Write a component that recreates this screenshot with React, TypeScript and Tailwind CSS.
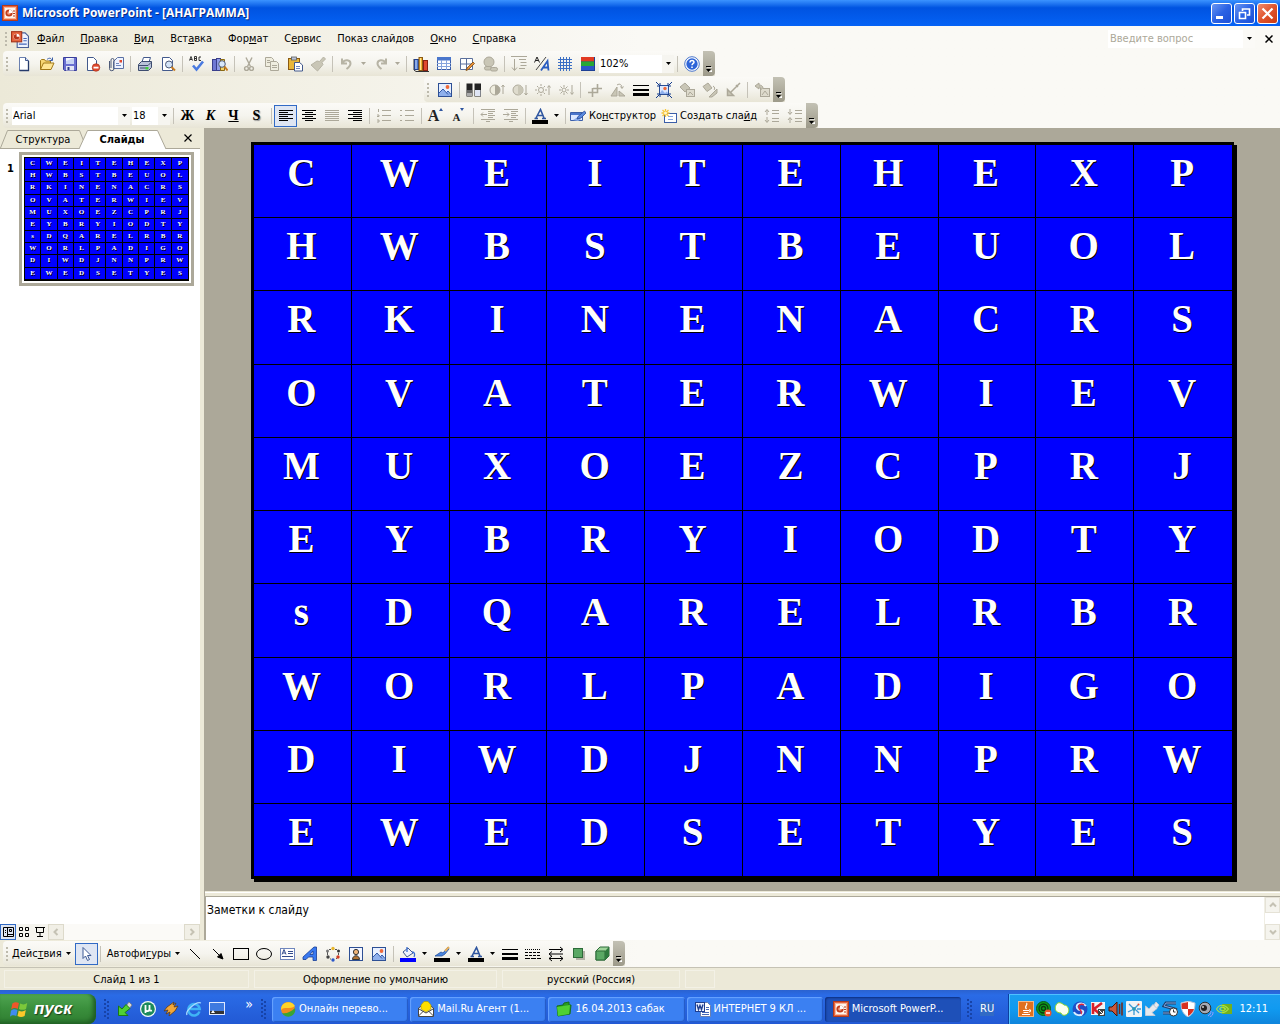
import { ReactNode } from "react";

const LETTERS = [
  "CWEITEHEXP",
  "HWBSTBEUOL",
  "RKINENACRS",
  "OVATERWIEV",
  "MUXOEZCPRJ",
  "EYBRYIODTY",
  "sDQARELRBR",
  "WORLPADIGO",
  "DIWDJNNPRW",
  "EWEDSETYES",
];

// [before, access key, after]
const MENUS = [
  ["", "Ф", "айл"],
  ["", "П", "равка"],
  ["", "В", "ид"],
  ["Вст", "а", "вка"],
  ["Фор", "м", "ат"],
  ["С", "е", "рвис"],
  ["Показ слай", "д", "ов"],
  ["", "О", "кно"],
  ["", "С", "правка"],
];

const G = "#aca899";

const ICONS: Record<string, ReactNode> = {
  ppt: (
    <>
      <rect x="0.5" y="0.5" width="15" height="15" fill="#e8643c" stroke="#b23a1c" />
      <rect x="2.5" y="2.5" width="11" height="11" fill="#fff4ec" stroke="#f7b79c" />
      <circle cx="7" cy="8" r="3.6" fill="#c23c1c" />
      <circle cx="7" cy="8" r="1.8" fill="#f4a184" />
      <path d="M7 8V4.500A3.500 3.500 0 0 1 10.500 8Z" fill="#fff" />
      <path d="M11 6h2M11 8.500h2M11 11h2" stroke="#b23a1c" />
    </>
  ),
  pptDoc: (
    <>
      <path d="M5.500 2.500h7l3 3v10h-10z" fill="#eef3ff" stroke="#4a5f96" />
      <path d="M11 7.500h3M11 9.500h3M7 12.500h7" stroke="#4567b8" />
      <rect x="0.5" y="1.500" width="9" height="9" fill="#e8643c" stroke="#a5341a" />
      <circle cx="5" cy="6" r="2.700" fill="#fff" />
      <path d="M5 6V3.500A2.500 2.500 0 1 0 7.500 6Z" fill="#b8361a" />
    </>
  ),
  newDoc: (
    <>
      <path d="M3.500 1.500h6l3 3v10h-9z" fill="#fff" stroke="#6a80b0" />
      <path d="M9.500 1.500v3h3" fill="#cfdcf5" stroke="#42598c" />
      <path d="M12.500 5v9.500h-9" fill="none" stroke="#253a6b" strokeWidth="1.300" />
    </>
  ),
  open: (
    <>
      <path d="M1.500 13.500v-9l1-1h3l1 1.500h5v2.500" fill="#f7d774" stroke="#a07818" />
      <path d="M1.500 13.500l3-6.500h10.500l-3 6.500z" fill="#ffe694" stroke="#a07818" />
      <path d="M8 3.500c2-2 4-1.500 5 .500M13.500 1.500v3h-3" fill="none" stroke="#3b5ea8" />
    </>
  ),
  save: (
    <>
      <path d="M1.500 1.500h13v13h-12l-1-1z" fill="#6a6fd0" stroke="#3a3f9c" />
      <rect x="4" y="2" width="8" height="6" fill="#f4f6ff" />
      <path d="M4 5l8-3v6H4z" fill="#c9d4f4" />
      <rect x="4" y="10" width="8" height="4.500" fill="#e4e6f4" />
      <rect x="5.500" y="11" width="2" height="3" fill="#2d3a8c" />
    </>
  ),
  perm: (
    <>
      <path d="M2.500 1.500h6l3 3v10h-9z" fill="#fff" stroke="#42598c" />
      <circle cx="11" cy="11.500" r="3.800" fill="#e0492e" stroke="#a12a14" strokeWidth=".6" />
      <rect x="8.500" y="10.700" width="5" height="1.800" fill="#fff" />
    </>
  ),
  mail: (
    <>
      <path d="M5.500 5.500l4-4h6v11h-10z" fill="#eef3ff" stroke="#5a70a4" />
      <rect x="11.500" y="4" width="2.500" height="2.500" fill="#e0492e" />
      <path d="M8 7.500h3M8 9.500h5" stroke="#6f86bd" />
      <path d="M1.500 5v7.500a2.200 2.200 0 0 0 4.500 0V4a1.500 1.500 0 0 0-3 0v8" fill="none" stroke="#4d5a78" />
    </>
  ),
  print: (
    <>
      <path d="M5 6l1.500-4.500h7L12 6z" fill="#fff" stroke="#42598c" />
      <path d="M1.500 8.500l3-3h10v6l-3 3h-10z" fill="#b9c3d8" stroke="#3d4c6e" />
      <path d="M2 9.500h9l3-3M3 12h6" stroke="#3d4c6e" fill="none" />
      <rect x="8.500" y="11" width="3" height="2.500" fill="#3fd03a" />
    </>
  ),
  preview: (
    <>
      <path d="M2.500 1.500h7l3 3v10h-10z" fill="#fff" stroke="#42598c" />
      <circle cx="9" cy="8.500" r="3.500" fill="#d4e4f7" stroke="#4d5a78" />
      <path d="M11.500 11l3.500 3.500" stroke="#c77a1e" strokeWidth="2" />
    </>
  ),
  spell: (
    <>
      <path d="M.500 4.500L2 .5l1.500 4M1 3.500h2M5.500.5v4h2v-2h-2 2v-2zM12 1h-2v3.500h2" fill="none" stroke="#222" strokeWidth=".9" />
      <path d="M4 9.500l3.500 4L14 5.500" fill="none" stroke="#4a7ae0" strokeWidth="2.600" />
    </>
  ),
  research: (
    <>
      <rect x="0.500" y="3.500" width="4" height="11" fill="#6f78d4" stroke="#3a3f8c" />
      <rect x="4.500" y="2.500" width="4" height="12" fill="#8f9be8" stroke="#3a3f8c" />
      <path d="M8.500 3.500h4v11h-4z" fill="#f2d36b" stroke="#8a6a14" />
      <circle cx="10" cy="8" r="3.300" fill="#d8e8fb" stroke="#4d5a78" />
      <path d="M12.500 10.500l3 4" stroke="#c77a1e" strokeWidth="2" />
    </>
  ),
  cut: (
    <g fill="none" stroke={G} strokeWidth="1.400">
      <path d="M5 1.500l4.500 9M11 1.500l-4.500 9" />
      <circle cx="5.500" cy="12.500" r="1.900" />
      <circle cx="10.500" cy="12.500" r="1.900" />
    </g>
  ),
  copy: (
    <g fill="#efeddf" stroke={G}>
      <path d="M1.500 1.500h6l2 2v7h-8z" />
      <path d="M6.500 5.500h6l2 2v7h-8z" />
      <path d="M3 4.500h3M3 6.500h3M8 9.500h5M8 11.500h5" />
    </g>
  ),
  paste: (
    <>
      <rect x="1.500" y="2.500" width="11" height="11" fill="#e8b63a" stroke="#8a5a14" />
      <rect x="4.500" y="1" width="5" height="3" fill="#b9c3d8" stroke="#5c5c5c" strokeWidth=".8" />
      <path d="M7.500 6.500h5l3 2.500v6h-8z" fill="#fff" stroke="#42598c" />
      <path d="M9 10.500h4M9 12.500h4" stroke="#6f86bd" />
    </>
  ),
  brush: <path d="M13.500 1L15.500 3l-3.500 3.500 1 2-5.500 6.500L1 9l6-4 2.500.5z" fill="#c9c6b6" stroke="#b7b4a5" />,
  undo: <path d="M3 2.500v5h5M3.500 7c2-4 8-3.500 8 .500 0 2.500-2 4-4 5.500" fill="none" stroke="#b7b4a5" strokeWidth="2" />,
  redo: <path d="M13 2.500v5H8M12.500 7c-2-4-8-3.500-8 .500 0 2.500 2 4 4 5.500" fill="none" stroke="#b7b4a5" strokeWidth="2" />,
  chart: (
    <>
      <path d="M1 3v11l2 1.500h13" fill="none" stroke="#333" />
      <rect x="1.500" y="3.500" width="4" height="10" fill="#4a76cc" stroke="#23408c" />
      <rect x="6" y="1.500" width="3.500" height="13" fill="#f2b230" stroke="#8a5a14" />
      <rect x="10.500" y="4.500" width="4" height="10" fill="#e0492e" stroke="#8a2010" />
      <path d="M3 4v9" stroke="#cfe0ff" />
      <path d="M7.500 2v12" stroke="#ffe694" />
    </>
  ),
  table: (
    <>
      <rect x="1.500" y="1.500" width="13" height="12" fill="#fff" stroke="#3b5ea8" />
      <rect x="1" y="1" width="14" height="3.500" fill="#4a76cc" />
      <path d="M1 7.500h14M1 10.500h14M5.500 4v10M10.500 4v10" stroke="#86a4dc" />
    </>
  ),
  drawTable: (
    <>
      <path d="M1.500 2.500h12v11h-12zM1.500 8h12M7.500 2.500v11" fill="#fff" stroke="#5a6f9c" />
      <path d="M14 6l1.500 1.500-6 6-2.500 1 1-2.500z" fill="#e8903a" stroke="#7a4a10" strokeWidth=".8" />
    </>
  ),
  link: (
    <g fill="#c9c6b6" stroke={G}>
      <circle cx="7" cy="6" r="5" />
      <rect x="2.500" y="10.500" width="7" height="3.500" rx="1.700" />
      <rect x="8.500" y="11.500" width="7" height="3.500" rx="1.700" />
    </g>
  ),
  expand: (
    <g stroke={G} fill="none">
      <path d="M0 .5h16M3.500 3v11M1 11.500l2.500 3 2.500-3M8 3.500h7M9.500 6.500h6M9.500 9.500h6M8 12.500h6" />
    </g>
  ),
  showFmt: (
    <>
      <path d="M.500 6.500L3 1l2.500 5.500M1.500 4.500h3" fill="none" stroke="#222" />
      <path d="M2 14L12 1" stroke="#444" />
      <path d="M7 14.500L13.500 5l1 9.500M9.500 11.500h5" fill="none" stroke="#2a5cc0" strokeWidth="1.800" />
    </>
  ),
  grid: <path d="M1 3.500h14M1 6.500h14M1 9.500h14M1 12.500h14M3.500 1v14M6.500 1v14M9.500 1v14M12.500 1v14" stroke="#3b6fc4" />,
  color: (
    <>
      <rect x="1" y="1" width="14" height="14" fill="#1d3f94" />
      <rect x="1" y="1" width="13" height="4.500" fill="#e23a22" />
      <rect x="1" y="5.500" width="13" height="4.500" fill="#28a834" />
      <rect x="1" y="10" width="13" height="4" fill="#2c56c8" />
    </>
  ),
  help: (
    <>
      <circle cx="8" cy="8" r="7.300" fill="#fff" stroke="#4a76cc" />
      <circle cx="8" cy="8" r="5.700" fill="#2d64d8" />
      <path d="M6 6.500c0-3 4-2.500 4-.300C10 7.500 8 7.500 8 9.300M8 10.500v1.500" fill="none" stroke="#fff" strokeWidth="1.500" />
    </>
  ),
  picture: (
    <>
      <rect x="1.500" y="1.500" width="13" height="13" fill="#e8f0ff" stroke="#2d4f94" />
      <circle cx="10.500" cy="5" r="1.900" fill="#ef6a3a" />
      <path d="M2 11l4-4 3 3.500 2-1.500 3 3.500V14H2z" fill="#8fb0ec" />
      <path d="M2 11l4-4 5 5.500M9.500 10.500l1.500-1.500 3 3.500" fill="none" stroke="#3359a8" />
    </>
  ),
  bw: (
    <>
      <rect x="0.500" y="1.500" width="6" height="13" fill="#222" />
      <path d="M1 8h5v3H1z" fill="#666" />
      <path d="M1 11h5v3H1z" fill="#aaa" />
      <rect x="8.500" y="1.500" width="6.500" height="13" fill="#222" />
      <path d="M9 8h5.500v6H9z" fill="#dfe5f5" />
    </>
  ),
  contrastUp: (
    <>
      <circle cx="6" cy="8" r="5" fill="#efeddf" stroke={G} />
      <path d="M6 3a5 5 0 0 1 0 10z" fill={G} />
      <path d="M14 12V3M12.500 5L14 3l1.500 2" fill="none" stroke={G} />
    </>
  ),
  contrastDown: (
    <>
      <circle cx="6" cy="8" r="5" fill="#dedbcd" stroke={G} />
      <path d="M6 3a5 5 0 0 1 0 10z" fill="#c9c6b6" />
      <path d="M14 3v10M12.500 11l1.500 2 1.500-2" fill="none" stroke={G} />
    </>
  ),
  brightUp: (
    <g fill="none" stroke={G}>
      <circle cx="6" cy="8" r="2.500" />
      <path d="M6 2v2M6 12v2M0 8h2M10 8h2M2 4l1.500 1.500M10 4L8.500 5.500M2 12l1.500-1.500M10 12l-1.500-1.500M14 13V4M12.500 5.500L14 3.500l1.500 2" />
    </g>
  ),
  brightDown: (
    <g fill="none" stroke={G}>
      <circle cx="6" cy="8" r="2" />
      <path d="M6 3v2M6 11v2M1 8h2M9 8h2M2.500 4.500L4 6M9.500 4.500L8 6M2.500 11.500L4 10M9.500 11.500L8 10M14 3v9M12.500 10.500l1.500 2 1.500-2" />
    </g>
  ),
  crop: <path d="M5.500 6v9M1 10.500h9.500V2M6 6.500h9" fill="none" stroke={G} strokeWidth="1.600" />,
  rotate: (
    <g stroke={G} fill="#c9c6b6">
      <path d="M7 5v9H1zM9 9l6 5H9z" />
      <path d="M7 3c3-2 5 0 5 3M10.500 4.500L12 6.500l1.500-2" fill="none" />
    </g>
  ),
  lineStyle: (
    <>
      <path d="M0 3.500h16" stroke="#000" />
      <path d="M0 8h16" stroke="#000" strokeWidth="2" />
      <path d="M0 12.500h16" stroke="#000" strokeWidth="3" />
    </>
  ),
  compress: (
    <>
      <rect x="3.500" y="3.500" width="9" height="9" fill="#dce8ff" stroke="#2d4f94" />
      <circle cx="9" cy="6.500" r="1.700" fill="#ef6a3a" />
      <path d="M4 11l2-3 3 3 2-1.500 1.500 2.500H4z" fill="#8fb0ec" />
      <path d="M0 0l4 4M16 0l-4 4M0 16l4-4M16 16l-4-4M1 4h3V1M15 4h-3V1M1 12h3v3M15 12h-3v3" stroke="#123a8c" fill="none" />
    </>
  ),
  recolor: (
    <g fill="#c9c6b6" stroke={G}>
      <path d="M1 5l5-4 5 5-5 4z" />
      <rect x="7.500" y="7.500" width="8" height="7" fill="#dedbcd" />
      <path d="M9 13l2-3 3 3" fill="none" />
    </g>
  ),
  format: (
    <g fill="#c9c6b6" stroke={G}>
      <path d="M1 4.500l5-3.500 4 5-5 3.500z" />
      <path d="M15 7l-5 5-3 3h3l5-4z" />
      <path d="M11 4c2 1 2 3 1 4" fill="none" />
    </g>
  ),
  transp: <path d="M15 1L6 10M2.500 7.500v6h6zM11 3l2 2" fill="#c9c6b6" stroke={G} strokeWidth="1.500" />,
  reset: (
    <g fill="#dedbcd" stroke={G}>
      <rect x="6.500" y="6.500" width="9" height="8" />
      <path d="M8 13l3-4 3 4" fill="none" />
      <path d="M9 6c0-2-2-3-4-3V1L1 4l4 3V5c2 0 2 1 2 3" fill="#c9c6b6" />
    </g>
  ),
  left: <path d="M1 2.500h14M1 4.500h9M1 6.500h14M1 8.500h9M1 10.500h14M1 12.500h9" stroke="#000" />,
  center: <path d="M1 2.500h14M4 4.500h8M1 6.500h14M4 8.500h8M1 10.500h14M4 12.500h8" stroke="#000" />,
  justify: <path d="M1 2.500h14M1 4.500h14M1 6.500h14M1 8.500h14M1 10.500h14M1 12.500h14" stroke={G} />,
  right: <path d="M1 2.500h14M6 4.500h9M1 6.500h14M6 8.500h9M1 10.500h14M6 12.500h9" stroke="#000" />,
  numList: <path d="M2.500 1v3M1 7h2v1.500H1M1 12h2v2H1M6 2.500h9M6 7.500h9M6 12.500h9" stroke={G} fill="none" />,
  bulList: <path d="M1 2.500h2M1 7.500h2M1 12.500h2M6 2.500h9M6 7.500h9M6 12.500h9" stroke={G} />,
  outdent: <path d="M1 1.500h14M8 3.500h7M8 5.500h5M8 7.500h7M8 9.500h5M1 11.500h14M6 13.500h4M1 6.500h6M3 4.500l-2 2 2 2" fill="none" stroke={G} />,
  indent: <path d="M1 1.500h14M8 3.500h7M8 5.500h5M8 7.500h7M8 9.500h5M1 11.500h14M6 13.500h4M0 6.500h6M4 4.500l2 2-2 2" fill="none" stroke={G} />,
  design: (
    <>
      <path d="M.5 4.500h12v8H.5z" fill="#dce8ff" stroke="#3b5ea8" />
      <path d="M1 5h11v2H1z" fill="#4a76cc" />
      <path d="M3 12l5-3 3 2-3 2z" fill="#8fb0ec" />
      <path d="M14.500 3L16 5l-5 5-4 1 1-2.500z" fill="#5a8ae0" stroke="#2a4a94" strokeWidth=".8" />
    </>
  ),
  newSlide: (
    <>
      <rect x="3.500" y="5.500" width="12" height="9" fill="#fff" stroke="#3b5ea8" />
      <path d="M7 8.500h5M7 11.500h5" stroke="#86a4dc" />
      <path d="M4.500 1v8M.500 5h8M1.500 2l6 6M7.500 2l-6 6" stroke="#f8c63a" strokeWidth="1.300" />
      <circle cx="4.500" cy="5" r="1.500" fill="#fff6cc" />
    </>
  ),
  moreSpace: <path d="M3 7V2M1 4l2-2.500L5 4M3 9v5M1 12l2 2.500L5 12M8 2.500h7M8 5.500h7M8 10.500h7M8 13.500h7" fill="none" stroke={G} />,
  lessSpace: <path d="M3 1v5M1 4l2 2.500L5 4M3 15v-5M1 12l2-2.500L5 12M8 2.500h7M8 5.500h7M8 10.500h7M8 13.500h7" fill="none" stroke={G} />,
  arrowCursor: <path d="M5 1.500v11l2.500-2.500 2 4.500 2-1-2-4h3.500z" fill="#fff" stroke="#3d5a94" />,
  line: <path d="M3 3l10 10" stroke="#000" />,
  arrow: <path d="M3 3l7 7M13 13L7.500 11 11 7.500z" stroke="#000" fill="#000" />,
  rect: <rect x="0.500" y="2.500" width="15" height="11" fill="none" stroke="#000" />,
  oval: <ellipse cx="8" cy="8" rx="7.500" ry="5.500" fill="none" stroke="#000" />,
  textBox: (
    <>
      <rect x="1.500" y="2.500" width="14" height="11" fill="#fff" stroke="#6f86bd" />
      <path d="M3 8.500l2-5 2 5M4 7h2M9 5.500h5M9 7.500h5M3 10.500h11" fill="none" stroke="#334c8c" />
    </>
  ),
  wordArt: (
    <>
      <path d="M1 11L12 1h2.500v13.500H11V11H6.500L4 13.500H1zM11 5L8 8.500h3z" fill="#3a7af0" stroke="#173c94" strokeWidth=".8" />
    </>
  ),
  diagram: (
    <>
      <path d="M4 3.500h2M10 3.500h2M13.500 7v2M2.500 6v3M5 13h1M11 12.500h1" stroke="#555" />
      <circle cx="8" cy="2.500" r="1.700" fill="#e8b62a" />
      <circle cx="13.500" cy="5" r="1.500" fill="#333" />
      <circle cx="13" cy="11" r="1.700" fill="#d23a22" />
      <circle cx="8" cy="14" r="1.700" fill="#2a56c8" />
      <circle cx="3" cy="11" r="1.700" fill="#444" />
      <circle cx="2.500" cy="5" r="1.500" fill="#777" />
    </>
  ),
  clip: (
    <>
      <rect x="1.500" y="1.500" width="13" height="13" fill="#f2f5ff" stroke="#2d4f94" />
      <circle cx="8" cy="6" r="2.600" fill="#f0b47a" stroke="#333" />
      <path d="M4.500 13.500c0-5 7-5 7 0z" fill="#b57434" stroke="#333" />
    </>
  ),
  fill: (
    <>
      <path d="M3 6l5-4 5 5-6 4z" fill="#eef3ff" stroke="#42598c" />
      <path d="M7 1v5M12 6c3 0 3 3 2 5" stroke="#3b6fd0" fill="none" strokeWidth="1.300" />
      <rect x="0" y="12" width="16" height="4" fill="#00f" />
    </>
  ),
  pen: (
    <>
      <path d="M14 1L9 7l-2-1-6 4h7l3-2 4-5z" fill="#4a86e0" stroke="#24509c" strokeWidth=".8" />
      <path d="M11 5l4-4" stroke="#e8b05a" strokeWidth="2" />
      <rect x="0" y="12" width="16" height="4" fill="#000" />
    </>
  ),
  fontColor: (
    <>
      <path d="M4 10L8.500 1.500 12 10M5.500 7.500h5M2.500 10.500h3.500M10 10.500h4" fill="none" stroke="#2f56a0" strokeWidth="1.600" />
      <rect x="0" y="12" width="16" height="4" fill="#000" />
    </>
  ),
  dash: (
    <>
      <path d="M0 3.500h16" stroke="#000" strokeDasharray="1 1" />
      <path d="M0 6.500h16M0 9.500h16" stroke="#000" strokeDasharray="3 1" />
      <path d="M0 12.500h16" stroke="#000" strokeDasharray="5 1" />
    </>
  ),
  arrows: <path d="M1 3.500h13M12 1l3 2.500L12 6M15 8H2M4 5.500L1 8l3 2.500M1 12.500h14M4 10l-3 2.500L4 15M12 10l3 2.500-3 2.500" fill="none" stroke="#000" />,
  shadow: (
    <>
      <rect x="5" y="5" width="9" height="9" fill="#b4b3a6" />
      <rect x="2.500" y="2.500" width="9" height="9" fill="#5aa864" stroke="#2c6b38" />
    </>
  ),
  cube: (
    <>
      <path d="M2 5l4-4h9v9l-4 4H2z" fill="#9fd49a" stroke="#2c6b38" />
      <path d="M2 5h9v9H2z" fill="#5aa864" stroke="#2c6b38" />
      <path d="M11 5l4-4v9l-4 4z" fill="#2f7a3e" />
    </>
  ),
  usb: (
    <>
      <path d="M9 5l3-4 3 3-3 4z" fill="#d8d8d8" stroke="#777" strokeWidth=".7" />
      <path d="M1.500 5v9.500h9.500l-3-3 5-4-4-4-4 4.500z" fill="#4fd034" stroke="#1b7a14" />
    </>
  ),
  utorrent: (
    <>
      <circle cx="8" cy="8" r="8" fill="#f4fbf7" />
      <circle cx="8" cy="8" r="6.800" fill="#1c8a5c" />
      <path d="M5.500 4v8M5.500 8.500c0 2.500 4 2 4-.500V4v4.500c0 1 1 1.500 2.500 1" fill="none" stroke="#fff" strokeWidth="1.800" />
    </>
  ),
  winamp: <path d="M11 1L4 6 1 10l4-1-2 4 4-2-1 4 6-5 3-5-4 1 2-4-3 2z" fill="#f2a73a" stroke="#5a3a1a" strokeWidth=".8" />,
  ie: (
    <>
      <path d="M13.500 10.500A5.700 5.700 0 1 1 13.700 8H4" fill="none" stroke="#3fb4f5" strokeWidth="2.500" />
      <path d="M1 14C-1 10 10 0 15 2" fill="none" stroke="#a8dcff" strokeWidth="1.300" />
    </>
  ),
  desktop: (
    <>
      <rect x="0.500" y="1.500" width="15" height="12" fill="#3f7ae0" stroke="#dfe8ff" />
      <path d="M1 10h14v3H1z" fill="#333" />
      <path d="M2 12l2-3 2 3z" fill="#fff" />
    </>
  ),
  promt: (
    <>
      <circle cx="8" cy="8" r="7" fill="#f28c1e" />
      <path d="M1 9C4 5 10 9 15 5A7.500 7.500 0 0 0 1 9z" fill="#ffd42a" />
      <path d="M2 12c4 1 9-1 13-5a7 7 0 0 1-13 5z" fill="#3aa534" />
    </>
  ),
  agent: (
    <>
      <path d="M.5 7L8 2l7.500 5v8.500H.5z" fill="#fff" stroke="#444" />
      <path d="M3 8V4l3-3.500h4L13 4v4l-5 3z" fill="#ffe000" stroke="#a89400" strokeWidth=".6" />
      <path d="M.5 15l5-5M15.500 15l-5-5M1 8l7 4 7-4" fill="none" stroke="#444" />
    </>
  ),
  folder: (
    <>
      <path d="M1 5l6-1 1-2 5-1v3l2 0-1 9-12 2z" fill="#2a9a24" stroke="#16701a" />
      <path d="M1 6l13-2-1 9-11 2z" fill="#4fd034" />
    </>
  ),
  word: (
    <>
      <path d="M5.500 1.500h7l3 3v11h-10z" fill="#fff" stroke="#6a7fb0" />
      <path d="M11 6.500h3M11 8.500h3M7 11.500h7M7 13.500h7" stroke="#4567b8" />
      <rect x="0.500" y="1.500" width="9" height="9" fill="#e8efff" stroke="#1f3f8f" />
      <path d="M2 3.500l1.500 5L5 4.500l1.500 4L8 3.500" fill="none" stroke="#1f3f8f" strokeWidth="1.400" />
    </>
  ),
  java: (
    <>
      <rect x="0.500" y="0.500" width="15" height="15" fill="#e07020" stroke="#f5b888" />
      <path d="M8.500 2c2 2-3 3 0 6M5 9.500h6M5.500 11.500h5M4 13.500h8M11 9c2-.5 2 2 0 2" fill="none" stroke="#fff" strokeWidth="1.200" />
    </>
  ),
  radar: (
    <>
      <circle cx="7.500" cy="7.500" r="7" fill="#0f9a1c" stroke="#0a5c1a" />
      <circle cx="7.500" cy="7.500" r="4.500" fill="none" stroke="#0a3c10" strokeWidth="1.300" />
      <circle cx="7.500" cy="7.500" r="2" fill="none" stroke="#0a3c10" strokeWidth="1.300" />
      <circle cx="12" cy="12" r="3.500" fill="#f0552a" />
      <path d="M10 12h4" stroke="#fff" strokeWidth="1.500" />
    </>
  ),
  messenger: <path d="M2 4c2-4 6-2 8 0 4 0 6 5 4 8-2 3-6 3-7 0C2 12 0 8 2 4z" fill="#fbfff0" stroke="#8fd62a" />,
  swirl: (
    <>
      <circle cx="8" cy="8" r="7.500" fill="#1d4fc8" />
      <path d="M14 5C10 0 3 3 5 7s8 1 6 5-8 2-9-1" fill="none" stroke="#d8f0ff" strokeWidth="1.800" />
      <path d="M12 4C9 2 6 4 7 7s4 3 2 6" fill="none" stroke="#e0243a" strokeWidth="1.500" />
    </>
  ),
  kasper: (
    <>
      <path d="M1 1h14v13H1z" fill="#f4f4f4" />
      <path d="M3 2v11M12 2L4 8l7 6" fill="none" stroke="#d8202a" strokeWidth="2.600" />
      <path d="M8 8h7v7H8z" fill="#444" />
      <path d="M9 9l4 4M13.500 10v3.500H10" stroke="#fff" fill="none" />
    </>
  ),
  speakerRed: (
    <>
      <path d="M1 6h3l5-5v14L4 10H1z" fill="#c8583a" stroke="#4a1408" />
      <path d="M11.500 3v10M14 1.500v13" stroke="#7a2410" strokeWidth="1.500" />
    </>
  ),
  atom: (
    <>
      <rect width="16" height="16" rx="1" fill="#f0f3f6" />
      <path d="M3 3l4 4M12 4L9 7M8 10v4M2 11l4-2M13 12l-3-3M11 8h4" stroke="#3a9ad8" strokeWidth="1.300" />
      <circle cx="8" cy="8" r="2" fill="#2a98b8" />
      <circle cx="12.500" cy="3.500" r="1" fill="#e04a2a" />
    </>
  ),
  unplug: (
    <>
      <path d="M10 4l2-3 3 3-3 4z" fill="#e6e9ee" stroke="#c4ccd8" />
      <path d="M1.500 5v9.500h9.500l-3-3 5-4-4-4-4 4.500z" fill="#e6e9ee" stroke="#c4ccd8" />
    </>
  ),
  scanner: (
    <>
      <path d="M14 2H4L2 5l11 3-3 4H1" fill="none" stroke="#24406c" strokeWidth="3" />
      <path d="M14 2H4L2 5l11 3-3 4H1" fill="none" stroke="#7fa8e0" />
      <circle cx="11.500" cy="11" r="4" fill="#fff" stroke="#333" />
      <path d="M11.500 8.500V11h2" fill="none" stroke="#333" />
    </>
  ),
  shield: (
    <>
      <path d="M8 0l7 2c0 7-2 11-7 14C3 13 1 9 1 2z" fill="#fff" stroke="#b9c3d8" />
      <path d="M8 1v7H2C1.500 6 1.500 4 1.500 2.500zM8 8h6c-1 3-3 5.500-6 7z" fill="#d83020" />
    </>
  ),
  sound: (
    <>
      <circle cx="7" cy="7" r="5.800" fill="#a4aab4" stroke="#333" />
      <circle cx="6" cy="7" r="3" fill="#222" />
      <circle cx="5" cy="6" r="1" fill="#ccc" />
      <path d="M13 10c0 2-1 4-3 5M15 11c0 3-1 4-3 4.500" fill="none" stroke="#9c9cff" />
    </>
  ),
  nvidia: (
    <>
      <path d="M6 3h10v10H6z" fill="#74b01c" />
      <path d="M.5 8c3-5 8-5 12 0-4 5-9 5-12 0zM3.500 8c2-3 4-2 6 0-2 3-4 2-6 0" fill="none" stroke="#a8e04a" strokeWidth="1.200" />
    </>
  ),
  xpFlag: (
    <>
      <path d="M2 3c2-1.500 3.500-1.500 5.500-.500L6.500 7.500C4.500 6.500 3 6.500 1 8z" fill="#f0562a" />
      <path d="M8.500 3c2 1 4 1 6-.500L13.500 7.500c-2 1-4 1-6 0z" fill="#7cc83a" />
      <path d="M.800 9c2-1.500 3.500-1.500 5.500-.500L5.300 13.500c-2-1-3.500-1-5.300.500z" fill="#3f8cf0" />
      <path d="M7.300 9c2 1 4 1 6-.500L12.300 13.500c-2 1-4 1-6 0z" fill="#fbc82a" />
    </>
  ),
  viewNormal: <path d="M3.500 3.500h10v9h-10zM7.500 3.500v9M7.500 10.500h6M5 6.500h1M5 8.500h1M9.500 5.500h2v2h-2z" fill="none" stroke="#000" />,
  viewSorter: <path d="M3.500 3.500h3v3h-3zM9.500 3.500h3v3h-3zM3.500 9.500h3v3h-3zM9.500 9.500h3v3h-3z" fill="none" stroke="#000" />,
  viewShow: <path d="M3 3.500h10M4.500 4v4.500h7V4M8 9v4M5 12.500h6" fill="none" stroke="#000" />,
};

function Icon({ name, className = "h-4 w-4" }: { name: string; className?: string }) {
  return (
    <svg viewBox="0 0 16 16" className={className + " shrink-0"} aria-hidden="true">
      {ICONS[name]}
    </svg>
  );
}

function Caret({ off = false }: { off?: boolean }) {
  return (
    <svg viewBox="0 0 5 3" className="h-[3px] w-[5px] shrink-0" aria-hidden="true">
      <path d="M0 0h5L2.500 3z" fill={off ? G : "#000"} />
    </svg>
  );
}

function Chevron({ d }: { d: string }) {
  return (
    <svg viewBox="0 0 8 8" className="h-2 w-2" aria-hidden="true">
      <path d={d} fill="none" stroke="#c5c2b4" strokeWidth="2" />
    </svg>
  );
}

function Btn({ icon, label, active = false, children }: { icon?: string; label: string; active?: boolean; children?: ReactNode }) {
  return (
    <button
      aria-label={label}
      className={
        "flex h-[22px] w-[23px] shrink-0 items-center justify-center " +
        (active ? "border border-[#316ac5] bg-[#dfe6f3]" : "")
      }
    >
      {icon ? <Icon name={icon} /> : children}
    </button>
  );
}

function Drop({ label, off = false }: { label: string; off?: boolean }) {
  return (
    <button aria-label={label} className="flex h-[22px] w-[11px] shrink-0 items-center justify-center">
      <Caret off={off} />
    </button>
  );
}

function Sep() {
  return (
    <span className="flex w-[6px] shrink-0 justify-center">
      <span className="h-4 w-px bg-[#c5c2b8]" />
    </span>
  );
}

function Grip() {
  return (
    <svg viewBox="0 0 3 16" className="mx-[3px] h-4 w-[3px] shrink-0" aria-hidden="true">
      <path d="M1 1v14" stroke="#bdbaac" strokeWidth="2" strokeDasharray="2 2" />
    </svg>
  );
}

function Cap() {
  return (
    <button aria-label="Параметры панелей инструментов" className="flex h-[25px] w-3 shrink-0 items-end justify-center self-stretch rounded-r-sm bg-linear-to-b from-[#c3c1b4] to-[#9d9a8a] pb-1">
      <svg viewBox="0 0 6 6" className="h-[6px] w-[6px]" aria-hidden="true">
        <path d="M1 1.500h5M3 6h3V4z" stroke="#fff" fill="#fff" strokeWidth=".6" />
        <path d="M0 .5h5" stroke="#000" />
        <path d="M0 3h5L2.500 6z" fill="#000" />
      </svg>
    </button>
  );
}

function Bar({ children, label }: { children: ReactNode; label: string }) {
  return (
    <div role="toolbar" aria-label={label} className="flex h-[25px] items-center rounded-l-sm bg-linear-to-b from-[#fbfaf7] via-[#f5f4ee] to-[#e8e5d6]">
      <Grip />
      {children}
      <Cap />
    </div>
  );
}

function Combo({ label, value, className }: { label: string; value: string; className: string }) {
  return (
    <span className={"relative flex h-[18px] shrink-0 items-center bg-white " + className}>
      <select aria-label={label} defaultValue={value} className="h-full w-full appearance-none bg-transparent pl-px outline-none">
        <option>{value}</option>
      </select>
      <span className="pointer-events-none absolute inset-y-0 right-0 flex w-3 items-center justify-center bg-[#f6f5f0]">
        <Caret />
      </span>
    </span>
  );
}

function Letters({ small = false }: { small?: boolean }) {
  return (
    <table
      aria-hidden={small}
      className={
        "h-full w-full table-fixed border-separate border-spacing-0 bg-[#0000ff] text-center font-['Liberation_Serif',serif] font-bold text-white " +
        (small
          ? "text-[7px] leading-[8px] [text-shadow:1px_1px_0_#000]"
          : "text-[39px] leading-[44px] [text-shadow:1px_1px_0_#000]")
      }
    >
      <tbody>
        {LETTERS.map((row, r) => (
          <tr key={r}>
            {row.split("").map((ch, c) => (
              <td
                key={c}
                className={
                  "border-r border-b border-black p-0 align-top last:border-r-0 " +
                  (small ? "pt-px" : "pt-[6px] pr-[2px]")
                }
              >
                {ch}
              </td>
            ))}
          </tr>
        ))}
      </tbody>
    </table>
  );
}

function TitleBar() {
  const box = "flex h-[21px] w-[21px] items-center justify-center rounded-[3px] border border-white ";
  return (
    <header className="flex h-[26px] items-center bg-linear-to-b from-[#3b93ff] via-[#0053e1] via-30% to-[#0562f5] px-[2px]">
      <Icon name="ppt" />
      <h1 className="ml-1 flex-1 font-['Open_Sans',sans-serif] text-[12px] leading-[20px] font-bold whitespace-nowrap text-white [text-shadow:1px_1px_0_#0a2a80]">
        Microsoft PowerPoint - [АНАГРАММА]
      </h1>
      <div className="flex gap-[2px]">
        <button aria-label="Свернуть" className={box + "bg-linear-to-br from-[#6a95f2] via-[#2a62e4] to-[#1c4fd6]"}>
          <svg viewBox="0 0 13 13" className="h-[13px] w-[13px]"><path d="M1 10.500h7" stroke="#fff" strokeWidth="3" /></svg>
        </button>
        <button aria-label="Восстановить" className={box + "bg-linear-to-br from-[#6a95f2] via-[#2a62e4] to-[#1c4fd6]"}>
          <svg viewBox="0 0 13 13" className="h-[13px] w-[13px]">
            <path d="M4.500 4V2h7v6H9" fill="none" stroke="#fff" strokeWidth="1.600" />
            <path d="M1.500 5.500h6v6h-6z" fill="none" stroke="#fff" strokeWidth="1.600" />
          </svg>
        </button>
        <button aria-label="Закрыть" className={box + "bg-linear-to-br from-[#ef8a6c] via-[#e0542c] to-[#cc3a10]"}>
          <svg viewBox="0 0 13 13" className="h-[13px] w-[13px]"><path d="M1.500 1.500l10 10M11.500 1.500l-10 10" stroke="#fff" strokeWidth="2.200" /></svg>
        </button>
      </div>
    </header>
  );
}

function MenuBar() {
  return (
    <div className="flex h-[25px] items-center pr-[3px]">
      <div className="ml-[2px] flex items-center">
        <Grip />
      </div>
      <Icon name="pptDoc" className="h-[18px] w-[18px]" />
      <nav className="flex flex-1 items-center">
        {MENUS.map(([a, k, b]) => (
          <button key={a + k + b} className="px-2 whitespace-nowrap">
            {a}
            <u>{k}</u>
            {b}
          </button>
        ))}
      </nav>
      <div className="relative flex h-[18px] w-[147px] items-center bg-white">
        <input aria-label="Введите вопрос" placeholder="Введите вопрос" className="h-full w-full bg-transparent pl-[2px] outline-none placeholder:text-[#aca899]" />
        <span className="pointer-events-none absolute inset-y-0 right-0 flex w-3 items-center justify-center bg-[#fbfaf7]">
          <Caret />
        </span>
      </div>
      <button aria-label="Закрыть окно" className="ml-[6px] flex h-4 w-4 items-center justify-center">
        <svg viewBox="0 0 8 8" className="h-2 w-2"><path d="M.500.500l7 7M7.500.500l-7 7" stroke="#000" strokeWidth="1.500" /></svg>
      </button>
    </div>
  );
}

function StandardBar() {
  return (
    <Bar label="Стандартная">
      <Btn icon="newDoc" label="Создать" />
      <Btn icon="open" label="Открыть" />
      <Btn icon="save" label="Сохранить" />
      <Btn icon="perm" label="Разрешения" />
      <Btn icon="mail" label="Сообщение" />
      <Sep />
      <Btn icon="print" label="Печать" />
      <Btn icon="preview" label="Просмотр" />
      <Sep />
      <Btn icon="spell" label="Орфография" />
      <Btn icon="research" label="Справочные материалы" />
      <Sep />
      <Btn icon="cut" label="Вырезать" />
      <Btn icon="copy" label="Копировать" />
      <Btn icon="paste" label="Вставить" />
      <Btn icon="brush" label="Формат по образцу" />
      <Sep />
      <Btn icon="undo" label="Отменить" />
      <Drop label="Список отмены" off />
      <Btn icon="redo" label="Вернуть" />
      <Drop label="Список возврата" off />
      <Sep />
      <Btn icon="chart" label="Диаграмма" />
      <Btn icon="table" label="Таблица" />
      <Btn icon="drawTable" label="Таблицы и границы" />
      <Btn icon="link" label="Гиперссылка" />
      <Sep />
      <Btn icon="expand" label="Развернуть все" />
      <Btn icon="showFmt" label="Показать форматирование" />
      <Btn icon="grid" label="Сетка" />
      <Btn icon="color" label="Цвет" />
      <Combo label="Масштаб" value="102%" className="w-[75px]" />
      <Sep />
      <Btn icon="help" label="Помощь" />
    </Bar>
  );
}

function PictureBar() {
  return (
    <Bar label="Настройка изображения">
      <Btn icon="picture" label="Рисунок" />
      <Sep />
      <Btn icon="bw" label="Цвет рисунка" />
      <Btn icon="contrastUp" label="Увеличить контрастность" />
      <Btn icon="contrastDown" label="Уменьшить контрастность" />
      <Btn icon="brightUp" label="Увеличить яркость" />
      <Btn icon="brightDown" label="Уменьшить яркость" />
      <Sep />
      <Btn icon="crop" label="Обрезка" />
      <Btn icon="rotate" label="Повернуть" />
      <Btn icon="lineStyle" label="Тип линии" />
      <Btn icon="compress" label="Сжатие рисунков" />
      <Btn icon="recolor" label="Перекрасить" />
      <Btn icon="format" label="Формат рисунка" />
      <Btn icon="transp" label="Прозрачный цвет" />
      <Sep />
      <Btn icon="reset" label="Сброс" />
    </Bar>
  );
}

function FormatBar() {
  const letter = "font-['Liberation_Serif',serif] font-bold text-[14px] leading-none ";
  return (
    <Bar label="Форматирование">
      <Combo label="Шрифт" value="Arial" className="w-[118px]" />
      <Combo label="Размер" value="18" className="ml-[2px] w-[38px]" />
      <Sep />
      <Btn label="Полужирный"><span className={letter}>Ж</span></Btn>
      <Btn label="Курсив"><span className={letter + "italic"}>К</span></Btn>
      <Btn label="Подчеркнутый"><span className={letter + "underline"}>Ч</span></Btn>
      <Btn label="Тень"><span className={letter + "[text-shadow:1px_1px_1px_#888]"}>S</span></Btn>
      <Sep />
      <Btn icon="left" label="По левому краю" active />
      <Btn icon="center" label="По центру" />
      <Btn icon="justify" label="По ширине" />
      <Btn icon="right" label="По правому краю" />
      <Sep />
      <Btn icon="numList" label="Нумерация" />
      <Btn icon="bulList" label="Маркеры" />
      <Sep />
      <Btn label="Увеличить размер шрифта">
        <span className="flex">
          <span className="font-['Liberation_Serif',serif] text-[16px] leading-none font-bold text-[#222]">A</span>
          <svg viewBox="0 0 4 3" className="h-[3px] w-1"><path d="M0 3h4L2 0z" fill="#2f56a0" /></svg>
        </span>
      </Btn>
      <Btn label="Уменьшить размер шрифта">
        <span className="flex">
          <span className="pt-1 font-['Liberation_Serif',serif] text-[11px] leading-none font-bold text-[#222]">A</span>
          <svg viewBox="0 0 4 3" className="h-[3px] w-1"><path d="M0 0h4L2 3z" fill="#2f56a0" /></svg>
        </span>
      </Btn>
      <Sep />
      <Btn icon="outdent" label="Уменьшить отступ" />
      <Btn icon="indent" label="Увеличить отступ" />
      <Sep />
      <Btn icon="fontColor" label="Цвет текста" />
      <Drop label="Цвета текста" />
      <Sep />
      <button className="flex h-[22px] items-center gap-[3px] px-[2px] whitespace-nowrap">
        <Icon name="design" />
        <span>Ко<u>н</u>структор</span>
      </button>
      <button className="flex h-[22px] items-center gap-[3px] px-[3px] whitespace-nowrap">
        <Icon name="newSlide" />
        <span>Создать сла<u>й</u>д</span>
      </button>
      <Btn icon="moreSpace" label="Увеличить интервал" />
      <Btn icon="lessSpace" label="Уменьшить интервал" />
    </Bar>
  );
}

function SidePanel() {
  const view = "flex h-4 w-4 items-center justify-center ";
  return (
    <aside className="flex w-[200px] shrink-0 flex-col bg-white">
      <div className="flex h-[21px] items-stretch border-b border-[#aca899] bg-[#ece9d8]">
        <div role="tablist" className="flex flex-1 items-stretch">
          <button role="tab" aria-selected="false" className="relative w-[82px] pt-1 pl-1">
            <svg viewBox="0 0 88 18" className="absolute bottom-0 left-0 h-[18px] w-[88px]" aria-hidden="true">
              <path d="M.500 18L7.500.500H79.500L86.500 18" fill="#ece9d8" stroke="#aca899" />
            </svg>
            <span className="relative">Структура</span>
          </button>
          <button role="tab" aria-selected="true" className="relative w-[84px] pt-1 pr-1 font-bold">
            <svg viewBox="0 0 88 19" className="absolute -bottom-px -left-[3px] h-[19px] w-[88px]" aria-hidden="true">
              <path d="M0 19L8.500.500H78.500L87 19" fill="#fff" stroke="#aca899" />
            </svg>
            <span className="relative">Слайды</span>
          </button>
        </div>
        <button aria-label="Закрыть панель" className="flex w-6 items-center justify-center">
          <svg viewBox="0 0 8 8" className="h-2 w-2"><path d="M.500.500l7 7M7.500.500l-7 7" stroke="#000" strokeWidth="1.200" /></svg>
        </button>
      </div>
      <div className="flex flex-1 items-start pt-[3px] pr-[6px] pl-[7px]">
        <span className="w-3 pt-[10px] font-bold">1</span>
        <div className="flex-1 border-[3px] border-[#aca899] bg-white p-[2px]">
          <div className="aspect-[4/3] border border-black bg-black">
            <Letters small />
          </div>
        </div>
      </div>
      <div className="flex h-4 bg-[#f5f4ee]">
        <button aria-label="Обычный режим" className={view + "bg-[#dfe6f3] outline -outline-offset-1 outline-[#316ac5]"}><Icon name="viewNormal" /></button>
        <button aria-label="Сортировщик слайдов" className={view}><Icon name="viewSorter" /></button>
        <button aria-label="Показ слайдов" className={view}><Icon name="viewShow" /></button>
        <button aria-label="Влево" className={view + "border border-[#dddacb] bg-[#f1efe6]"}><Chevron d="M5.500 1l-3 3 3 3" /></button>
        <span className="flex-1 bg-[#fbfaf7]" />
        <button aria-label="Вправо" className={view + "border border-[#dddacb] bg-[#f1efe6]"}><Chevron d="M2.500 1l3 3-3 3" /></button>
      </div>
    </aside>
  );
}

function Workspace() {
  return (
    <section className="flex min-w-0 flex-1 flex-col bg-[#ece9d8]">
      <div className="flex-1 bg-[#aca899] px-[46px] pt-[14px] pb-[11px]">
        <div className="aspect-[4/3] border-2 border-black bg-black pt-px pl-px shadow-[3px_3px_0_#000]">
          <Letters />
        </div>
      </div>
      <div className="mt-px h-[4px] border-t border-white bg-[#ece9d8]" />
      <div className="flex h-[44px] border-t border-l border-[#aca899] bg-white">
        <textarea aria-label="Заметки к слайду" defaultValue="Заметки к слайду" className="flex-1 resize-none pt-[6px] pl-px text-[12px] leading-[14px] outline-none" />
        <div className="flex w-4 flex-col justify-between border-l border-[#f0eee4]">
          <button aria-label="Вверх" className="flex h-4 items-center justify-center border border-[#e5e2d6] bg-[#f5f4ee]"><Chevron d="M1 5.500l3-3 3 3" /></button>
          <button aria-label="Вниз" className="flex h-4 items-center justify-center border border-[#e5e2d6] bg-[#f5f4ee]"><Chevron d="M1 2.500l3 3 3-3" /></button>
        </div>
      </div>
    </section>
  );
}

function DrawBar() {
  return (
    <div className="flex bg-linear-to-r from-[#ece9d8] to-[#faf9f5] to-50% py-px pl-[3px]">
      <Bar label="Рисование">
        <button className="flex h-[22px] items-center gap-1 pr-1 whitespace-nowrap">
          <span>Дейс<u>т</u>вия</span>
          <Caret />
        </button>
        <Btn icon="arrowCursor" label="Выбор объектов" active />
        <Sep />
        <button className="flex h-[22px] items-center gap-1 px-[3px] whitespace-nowrap">
          <span>Автофи<u>г</u>уры</span>
          <Caret />
        </button>
        <Btn icon="line" label="Линия" />
        <Btn icon="arrow" label="Стрелка" />
        <Btn icon="rect" label="Прямоугольник" />
        <Btn icon="oval" label="Овал" />
        <Btn icon="textBox" label="Надпись" />
        <Btn icon="wordArt" label="Объект WordArt" />
        <Btn icon="diagram" label="Организационная диаграмма" />
        <Btn icon="clip" label="Картинка" />
        <Btn icon="picture" label="Вставить рисунок" />
        <Sep />
        <Btn icon="fill" label="Цвет заливки" />
        <Drop label="Цвета заливки" />
        <Btn icon="pen" label="Цвет линий" />
        <Drop label="Цвета линий" />
        <Btn icon="fontColor" label="Цвет шрифта" />
        <Drop label="Цвета шрифта" />
        <Btn icon="lineStyle" label="Толщина линии" />
        <Btn icon="dash" label="Тип штриха" />
        <Btn icon="arrows" label="Вид стрелки" />
        <Btn icon="shadow" label="Стиль тени" />
        <Btn icon="cube" label="Объем" />
      </Bar>
    </div>
  );
}

function StatusBar() {
  const cell = "h-[18px] border border-[#f3f1e6] text-center leading-[18px] ";
  return (
    <footer className="flex h-[23px] items-center gap-[5px] border-t border-[#c5c2b4] bg-[#ece9d8] pl-1">
      <span className={cell + "w-[245px]"}>Слайд 1 из 1</span>
      <span className={cell + "w-[243px]"}>Оформление по умолчанию</span>
      <span className={cell + "w-[178px]"}>русский (Россия)</span>
      <span className={cell + "w-[30px]"} />
    </footer>
  );
}

const TASKS = [
  { icon: "promt", text: "Онлайн перево..." },
  { icon: "agent", text: "Mail.Ru Агент (1..." },
  { icon: "folder", text: "16.04.2013 сабак" },
  { icon: "word", text: "ИНТЕРНЕТ 9 КЛ ..." },
  { icon: "ppt", text: "Microsoft PowerP...", active: true },
];

const TRAY = ["java", "radar", "messenger", "swirl", "kasper", "speakerRed", "atom", "unplug", "scanner", "shield", "sound", "nvidia"];

function TaskGrip() {
  return (
    <svg viewBox="0 0 5 20" className="h-5 w-[5px] shrink-0" aria-hidden="true">
      <path d="M1 0v20M4 2v18" stroke="#1743a8" strokeWidth="2" strokeDasharray="2 2" />
    </svg>
  );
}

function Taskbar() {
  return (
    <div className="flex h-[34px] items-stretch bg-linear-to-b from-[#2a62d0] via-[#2a6be6] via-15% to-[#2259d4] pt-1 text-white">
      <button className="flex w-[96px] shrink-0 items-center gap-[5px] rounded-r-lg bg-linear-to-b from-[#4fa551] via-[#3a8f3c] to-[#2f7d31] pl-[10px] shadow-[inset_-3px_-2px_4px_#1f5c22]">
        <Icon name="xpFlag" className="h-[19px] w-[19px]" />
        <span className="font-['Liberation_Sans',sans-serif] text-[17px] font-bold italic [text-shadow:1px_1px_1px_#1c3f1c]">пуск</span>
      </button>
      <div className="flex w-[170px] shrink-0 items-center pl-2">
        <TaskGrip />
        <div className="flex flex-1 items-center gap-[7px] pl-2">
          {["usb", "utorrent", "winamp", "ie", "desktop"].map((n) => (
            <button key={n} aria-label={n}><Icon name={n} /></button>
          ))}
        </div>
        <button aria-label="Показать скрытые" className="self-start pr-2 text-[14px] leading-5">»</button>
        <TaskGrip />
      </div>
      <div className="flex min-w-0 flex-1 items-center gap-[2px] pr-[6px] pl-[6px]">
        {TASKS.map((t) => (
          <button
            key={t.text}
            className={
              "flex h-[25px] min-w-0 flex-1 items-center gap-[3px] rounded-[3px] pl-2 text-left whitespace-nowrap " +
              (t.active ? "bg-[#1e50b8] shadow-[inset_1px_1px_2px_#0d2f80]" : "bg-[#3b80f2] shadow-[inset_1px_1px_1px_#6aa3ff,inset_-1px_-1px_1px_#2458c4]")
            }
          >
            <Icon name={t.icon} />
            <span className="truncate">{t.text}</span>
          </button>
        ))}
      </div>
      <div className="flex w-[41px] shrink-0 items-center gap-2">
        <TaskGrip />
        <span className="bg-[#316ac5]">RU</span>
      </div>
      <div className="flex w-[272px] shrink-0 items-center border-l border-[#0b3fa0] bg-linear-to-b from-[#1b9df0] via-[#109af0] to-[#0f85dc] pl-[9px] shadow-[inset_1px_1px_0_#4fc0ff]">
        <div className="flex gap-[2px]">
          {TRAY.map((n) => (
            <Icon key={n} name={n} />
          ))}
        </div>
        <time className="flex-1 pr-3 text-right">12:11</time>
      </div>
    </div>
  );
}

export default function App() {
  return (
    <div className="flex min-h-screen flex-col bg-[#ece9d8] font-['DejaVu_Sans_Condensed','Noto_Sans',sans-serif] text-[11px] leading-[14px] text-black">
      <TitleBar />
      <div className="bg-linear-to-r from-[#ece9d8] to-[#faf9f5] to-50%">
        <MenuBar />
        <div className="flex pb-px pl-[3px]"><StandardBar /></div>
        <div className="flex pb-px pl-[424px]"><PictureBar /></div>
        <div className="flex pl-[3px]"><FormatBar /></div>
      </div>
      <main className="flex flex-1">
        <SidePanel />
        <div className="w-[5px] shrink-0 border-r border-[#aca899] bg-[#ece9d8]" />
        <Workspace />
      </main>
      <DrawBar />
      <StatusBar />
      <Taskbar />
    </div>
  );
}
